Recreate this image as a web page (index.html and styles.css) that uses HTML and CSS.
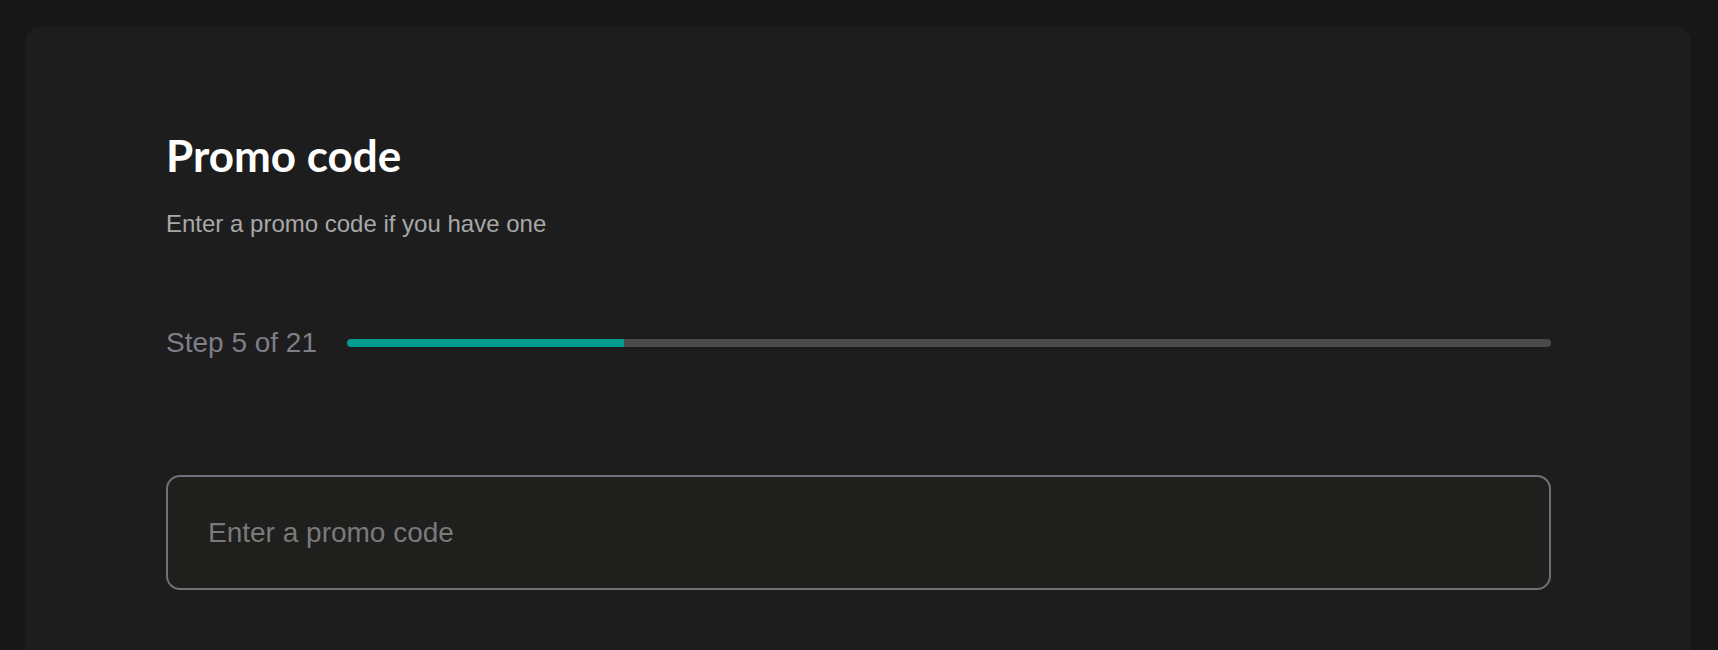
FILE: index.html
```html
<!DOCTYPE html>
<html lang="en">
<head>
<meta charset="utf-8">
<title>Promo code</title>
<link rel="stylesheet" href="styles.css">
</head>
<body>
<main class="card">
  <h1 class="title">Promo code</h1>
  <p class="subtitle">Enter a promo code if you have one</p>
  <div class="progress-row">
    <span class="step-label">Step 5 of 21</span>
    <div class="track"><div class="fill" style="width: 23%"></div></div>
  </div>
  <input class="promo-input" type="text" placeholder="Enter a promo code">
</main>
</body>
</html>
```
FILE: styles.css
```css
html, body {
  margin: 0;
  height: 100%;
}
body {
  background: #171717;
  padding: 26px 27px 0 25px;
  box-sizing: border-box;
  overflow: hidden;
  font-family: "Liberation Sans", Arial, sans-serif;
}
.card {
  background: #1d1d1d;
  border-radius: 16px 16px 0 0;
  padding: 102px 140px 120px 141px;
  min-height: 700px;
  box-sizing: border-box;
  display: flex;
  flex-direction: column;
}
.title {
  margin: 0;
  font-family: Lato, "Open Sans", sans-serif;
  font-weight: 700;
  font-size: 44px;
  line-height: 54px;
  color: #ffffff;
}
.subtitle {
  margin: 28px 0 0;
  font-size: 24px;
  line-height: 1.2;
  color: #a8a8a8;
}
.progress-row {
  margin-top: 87px;
  display: flex;
  align-items: center;
  gap: 30px;
}
.step-label {
  font-size: 28px;
  line-height: 1.2;
  color: #7c7f87;
  white-space: nowrap;
}
.track {
  flex: 1;
  height: 8px;
  border-radius: 4px;
  background: #4a4a4a;
  overflow: hidden;
}
.fill {
  height: 100%;
  background: #009e8f;
  border-radius: 4px 0 0 4px;
}
.promo-input {
  margin-top: 116px;
  height: 115px;
  box-sizing: border-box;
  border: 2px solid #6e7178;
  border-radius: 14px;
  background: #1f1f1e;
  padding: 0 40px;
  font-family: "Liberation Sans", Arial, sans-serif;
  font-size: 28px;
  color: #dddddd;
  outline: none;
}
.promo-input::placeholder {
  color: #7a7a7a;
}
```
